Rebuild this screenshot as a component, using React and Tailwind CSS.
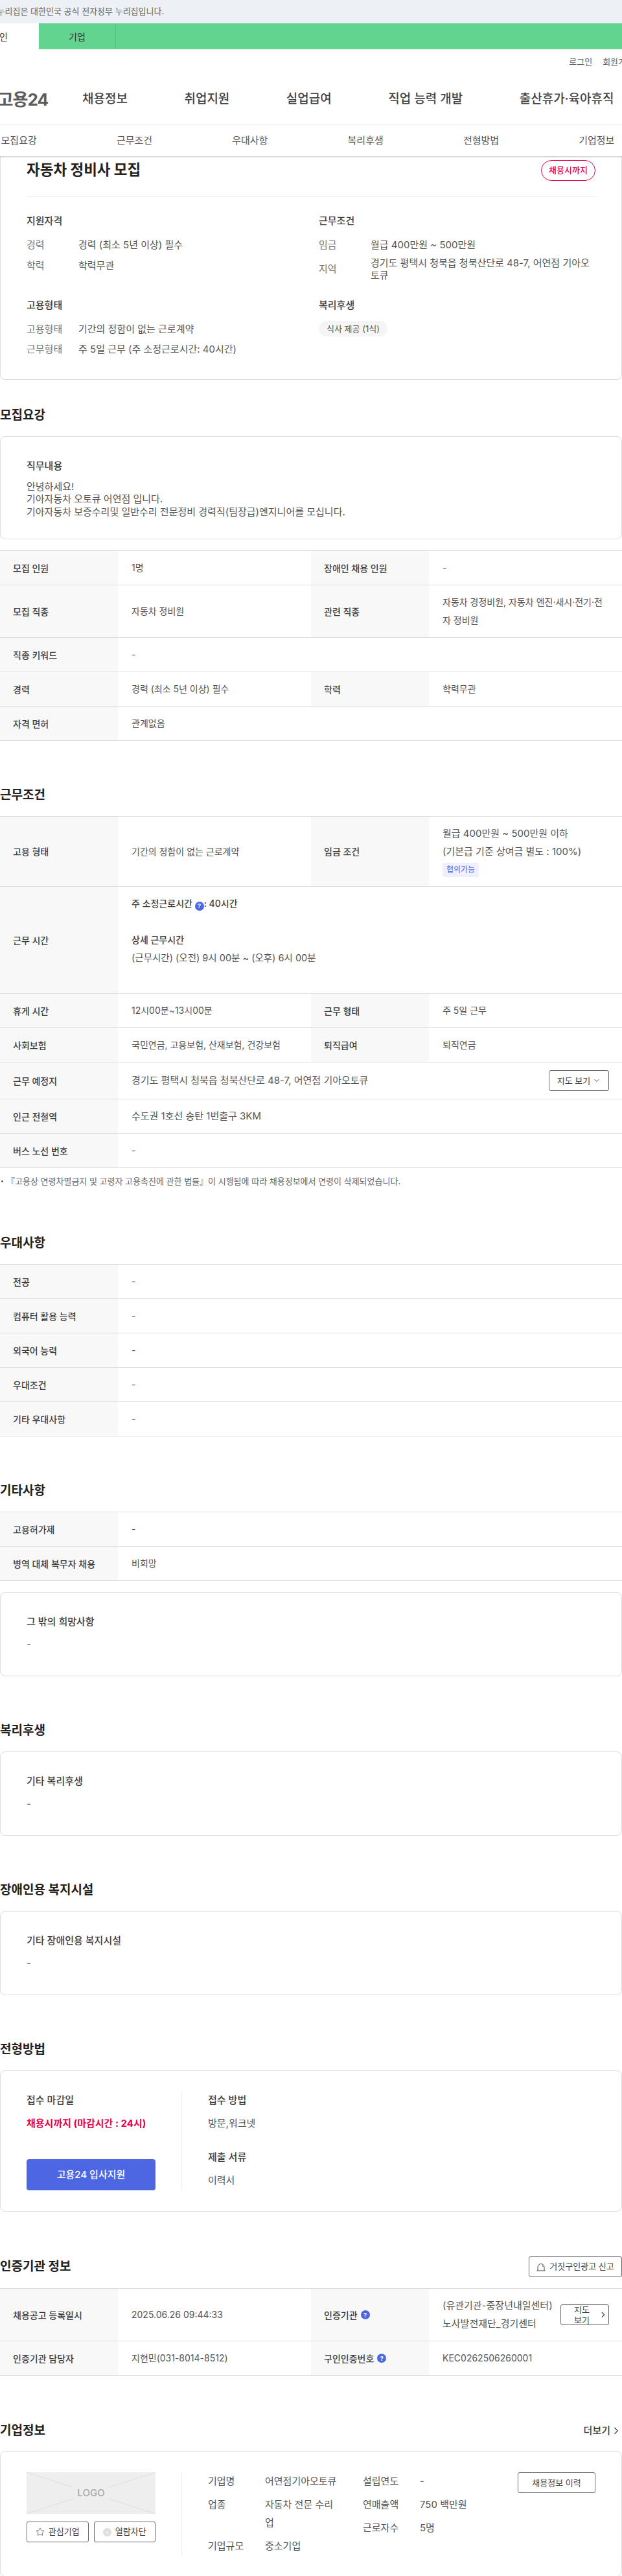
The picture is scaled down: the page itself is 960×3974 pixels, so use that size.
import { Star, ChevronDown, ChevronRight, X } from 'lucide-react';

const FONT = { fontFamily: '"Inter", "Noto Sans CJK KR", sans-serif' };

function Help() {
  return (
    <span className="inline-flex h-[14px] w-[14px] items-center justify-center rounded-full bg-[#4d67e3] align-[-2px] text-[9px] font-bold leading-none text-white">?</span>
  );
}

function Row({ cells, wide, className = '' }) {
  // cells: [label, value, label, value] 또는 [label, value]
  return (
    <div className={`flex border-b border-[#dddddd] ${className}`}>
      <div className="flex w-[182px] shrink-0 items-center bg-[#f8f8f8] pl-5 text-[14px] font-medium text-[#3c3c3c]">{cells[0]}</div>
      <div className={`${wide ? 'flex-1' : 'w-[298px]'} py-3 pl-[21px] text-[14px] leading-7 text-[#555555]`}>{cells[1]}</div>
      {cells.length > 2 && (
        <>
          <div className="flex w-[182px] shrink-0 items-center bg-[#f8f8f8] pl-5 text-[14px] font-medium text-[#3c3c3c]">{cells[2]}</div>
          <div className="flex-1 py-3 pl-[21px] pr-5 text-[14px] leading-7 text-[#555555]">{cells[3]}</div>
        </>
      )}
    </div>
  );
}

function Table({ children }) {
  return <div className="border-t border-[#dddddd]">{children}</div>;
}

function Heading({ children, className = 'mt-[68px] mb-4' }) {
  return <h3 className={`h-8 text-[19px] font-bold leading-8 text-[#222222] ${className}`}>{children}</h3>;
}

function Field({ label, value, className = '' }) {
  return (
    <div className={`flex text-[15px] leading-[19.5px] ${className}`}>
      <span className="w-20 shrink-0 self-center text-[#777777]">{label}</span>
      <span className="text-[#555555]">{value}</span>
    </div>
  );
}

function TextCard({ title }) {
  return (
    <div className="h-[130px] rounded-lg border border-[#dddddd] px-10 pt-[34px]">
      <div className="text-[15px] font-medium leading-[22px] text-[#3c3c3c]">{title}</div>
      <div className="mt-[14px] text-[15px] leading-[19.5px] text-[#555555]">-</div>
    </div>
  );
}

function Label({ children }) {
  return <div className="text-[15px] font-medium leading-[26px] text-[#3c3c3c]">{children}</div>;
}

export default function App() {
  return (
    <div className="h-[3974px] w-[960px] overflow-hidden bg-white" style={FONT}>
      {/* 상단 */}
      <div className="flex h-9 items-center whitespace-nowrap bg-[#edf0f5] text-[13px] text-[#666666]">
        <span className="ml-[-20px]">이 누리집은 대한민국 공식 전자정부 누리집입니다.</span>
      </div>
      <div className="flex h-10 bg-[#62d490] text-[14px] text-[#333333]">
        <div className="flex w-[60px] items-center overflow-hidden bg-white"><span className="ml-[-14px] whitespace-nowrap">개인</span></div>
        <div className="flex w-[119px] items-center justify-center border-r border-[#56c483]">기업</div>
      </div>

      <div className="flex h-10 items-center justify-end gap-4 whitespace-nowrap text-[13px] text-[#666666]">
        <span>로그인</span>
        <span className="mr-[-18px]">회원가입</span>
      </div>
      <div className="flex h-[77px] items-center whitespace-nowrap border-b border-[#eeeeee] pb-px">
        <div className="mr-[53px] flex w-[74px] shrink-0 justify-end text-[26px] font-bold tracking-[-1px] text-[#5c5c5c]">고용24</div>
        <nav className="flex gap-[87.5px] text-[19px] font-medium text-[#444444]">
          <span>채용정보</span>
          <span>취업지원</span>
          <span>실업급여</span>
          <span>직업 능력 개발</span>
          <span>출산휴가·육아휴직</span>
        </nav>
      </div>
      <div className="relative z-10 h-12 bg-white shadow-[0_1px_2px_rgba(0,0,0,0.25)]">
        <div className="ml-[-60px] flex h-full w-[1070px] text-[15px] text-[#555555]">
          {['모집요강', '근무조건', '우대사항', '복리후생', '전형방법', '기업정보'].map((t) => (
            <div key={t} className="flex flex-1 items-center justify-center">{t}</div>
          ))}
        </div>
      </div>

      {/* 공고 요약 */}
      <div className="rounded-b-lg border border-t-0 border-[#dddddd] px-10 pb-9">
        <div className="flex items-start justify-between border-b border-[#eeeeee] pb-6 pt-[6px]">
          <h2 className="text-[22.5px] font-bold leading-[30px] text-[#222222]">자동차 정비사 모집</h2>
          <span className="flex h-8 w-[84px] items-center justify-center rounded-full border border-[#e6004d] text-[13px] font-medium text-[#e6004d]">채용시까지</span>
        </div>
        <div className="mt-[26px] grid grid-cols-2 gap-x-6 gap-y-[25px]">
          <div>
            <div className="mb-4 text-[15px] font-medium leading-[22px] text-[#3c3c3c]">지원자격</div>
            <Field label="경력" value="경력 (최소 5년 이상) 필수" />
            <Field label="학력" value="학력무관" className="mt-3" />
          </div>
          <div>
            <div className="mb-4 text-[15px] font-medium leading-[22px] text-[#3c3c3c]">근무조건</div>
            <Field label="임금" value="월급 400만원 ~ 500만원" />
            <Field label="지역" value="경기도 평택시 청북읍 청북산단로 48-7, 어연점 기아오토큐" className="mt-2" />
          </div>
          <div>
            <div className="mb-4 text-[15px] font-medium leading-[22px] text-[#3c3c3c]">고용형태</div>
            <Field label="고용형태" value="기간의 정함이 없는 근로계약" />
            <Field label="근무형태" value="주 5일 근무 (주 소정근로시간: 40시간)" className="mt-3" />
          </div>
          <div>
            <div className="mb-3 text-[15px] font-medium leading-[22px] text-[#3c3c3c]">복리후생</div>
            <span className="inline-flex h-6 items-center rounded-full bg-[#f5f5f5] px-3 text-[13px] text-[#555555]">식사 제공 (1식)</span>
          </div>
        </div>
      </div>

      {/* 모집요강 */}
      <Heading className="mt-[39px] mb-4">모집요강</Heading>
      <div className="rounded-lg border border-[#dddddd] px-10 pb-8 pt-[34px]">
        <div className="text-[15px] font-medium leading-[22px] text-[#3c3c3c]">직무내용</div>
        <div className="mt-[11px] text-[15px] leading-[19.5px] text-[#555555]">
          안녕하세요!<br />
          기아자동차 오토큐 어연점 입니다.<br />
          기아자동차 보증수리및 일반수리 전문정비 경력직(팀장급)엔지니어를 모십니다.
        </div>
      </div>
      <div className="mt-[17px]">
        <Table>
          <Row cells={['모집 인원', '1명', '장애인 채용 인원', '-']} />
          <Row cells={['모집 직종', <span className="flex h-full items-center">자동차 정비원</span>, '관련 직종', '자동차 경정비원, 자동차 엔진·새시·전기·전자 정비원']} />
          <Row wide cells={['직종 키워드', '-']} />
          <Row cells={['경력', '경력 (최소 5년 이상) 필수', '학력', '학력무관']} />
          <Row wide cells={['자격 면허', '관계없음']} />
        </Table>
      </div>

      {/* 근무조건 */}
      <Heading>근무조건</Heading>
      <Table>
        <Row
          cells={[
            '고용 형태',
            <span className="flex h-full items-center">기간의 정함이 없는 근로계약</span>,
            '임금 조건',
            <div className="text-[15px]">
              월급 400만원 ~ 500만원 이하<br />
              (기본급 기준 상여금 별도 : 100%)
              <span className="mb-[2px] mt-[3px] flex h-[22px] w-14 items-center justify-center rounded-[3px] bg-[#eef1fd] text-[12px] text-[#4d67e3]">협의가능</span>
            </div>,
          ]}
        />
        <Row
          wide
          cells={[
            '근무 시간',
            <div className="text-[#3c3c3c]">
              <span className="font-medium">주 소정근로시간 <Help />: 40시간</span>
              <br />
              <br />
              <span className="font-medium">상세 근무시간</span>
              <br />
              <span className="text-[14.5px] text-[#555555]">(근무시간) (오전) 9시 00분 ~ (오후) 6시 00분</span>
              <br />
              <br />
            </div>,
          ]}
        />
        <Row cells={['휴게 시간', '12시00분~13시00분', '근무 형태', '주 5일 근무']} />
        <Row cells={['사회보험', '국민연금, 고용보험, 산재보험, 건강보험', '퇴직급여', '퇴직연금']} />
        <Row
          wide
          cells={[
            '근무 예정지',
            <div className="flex items-center justify-between pr-5">
              <span className="text-[15px]">경기도 평택시 청북읍 청북산단로 48-7, 어연점 기아오토큐</span>
              <span className="flex h-8 w-[93px] items-center justify-center gap-1 rounded-[3px] border border-[#666666] text-[13px] text-[#444444]">
                지도 보기 <ChevronDown size={12} />
              </span>
            </div>,
          ]}
        />
        <Row wide cells={['인근 전철역', <span className="text-[15px]">수도권 1호선 송탄 1번출구 3KM</span>]} />
        <Row wide cells={['버스 노선 번호', '-']} />
      </Table>
      <div className="mt-[10px] flex items-center gap-[5px] pl-[2px] text-[13px] leading-5 text-[#666666]">
        <span className="h-[3px] w-[3px] rounded-full bg-[#555555]" />
        『고용상 연령차별금지 및 고령자 고용촉진에 관한 법률』이 시행됨에 따라 채용정보에서 연령이 삭제되었습니다.
      </div>

      {/* 우대사항 */}
      <Heading className="mt-[70px] mb-4">우대사항</Heading>
      <Table>
        <Row wide cells={['전공', '-']} />
        <Row wide cells={['컴퓨터 활용 능력', '-']} />
        <Row wide cells={['외국어 능력', '-']} />
        <Row wide cells={['우대조건', '-']} />
        <Row wide cells={['기타 우대사항', '-']} />
      </Table>

      {/* 기타사항 */}
      <Heading>기타사항</Heading>
      <Table>
        <Row wide cells={['고용허가제', '-']} />
        <Row wide cells={['병역 대체 복무자 채용', '비희망']} />
      </Table>
      <div className="mt-[17px]">
        <TextCard title="그 밖의 희망사항" />
      </div>

      <Heading>복리후생</Heading>
      <TextCard title="기타 복리후생" />

      <Heading>장애인용 복지시설</Heading>
      <TextCard title="기타 장애인용 복지시설" />

      {/* 전형방법 */}
      <Heading>전형방법</Heading>
      <div className="flex rounded-lg border border-[#dddddd] px-10 py-8">
        <div className="flex h-[152px] w-[240px] shrink-0 flex-col justify-between border-r border-[#eeeeee] pr-10">
          <div>
            <Label>접수 마감일</Label>
            <div className="mt-[10px] whitespace-nowrap text-[15px] font-bold leading-[26px] text-[#e6004d]">채용시까지 (마감시간 : 24시)</div>
          </div>
          <div className="flex h-12 items-center justify-center rounded bg-[#4d67e3] text-[15px] font-medium text-white">고용24 입사지원</div>
        </div>
        <div className="pl-10">
          <Label>접수 방법</Label>
          <div className="mt-[10px] text-[15px] leading-[26px] text-[#555555]">방문,워크넷</div>
          <div className="mt-[26px]"><Label>제출 서류</Label></div>
          <div className="mt-[10px] text-[15px] leading-[26px] text-[#555555]">이력서</div>
        </div>
      </div>

      {/* 인증기관 정보 */}
      <div className="mb-[17px] mt-[69px] flex h-8 items-center justify-between">
        <h3 className="text-[19px] font-bold text-[#222222]">인증기관 정보</h3>
        <span className="flex h-8 w-[144px] items-center justify-center gap-[6px] rounded-[3px] border border-[#666666] text-[13px] text-[#444444]">
          <svg width="14" height="13" viewBox="0 0 14 13" fill="none" stroke="#444444" strokeWidth="1">
            <path d="M2 12V6.5a5 5 0 0 1 10 0V12M0.5 12h13M8.5 3.5a3 3 0 0 1 1.5 2.5" />
          </svg>
          거짓구인광고 신고
        </span>
      </div>
      <Table>
        <Row
          cells={[
            '채용공고 등록일시',
            <span className="flex h-full items-center">2025.06.26 09:44:33</span>,
            <span className="flex items-center gap-[5px]">인증기관 <Help /></span>,
            <div className="flex items-center justify-between">
              <span className="whitespace-nowrap text-[15px]">(유관기관-중장년내일센터)<br />노사발전재단_경기센터</span>
              <span className="flex h-8 w-[75px] items-center rounded-[3px] border border-[#666666] text-[13px] leading-[16.5px] text-[#444444]">
                <span className="ml-[9px] w-[46px] break-keep text-center">지도 보기</span>
                <ChevronRight size={14} strokeWidth={2} className="ml-[3px]" />
              </span>
            </div>,
          ]}
        />
        <Row
          cells={[
            '인증기관 담당자',
            '지현민(031-8014-8512)',
            <span className="flex items-center gap-[5px]">구인인증번호 <Help /></span>,
            'KEC0262506260001',
          ]}
        />
      </Table>

      {/* 기업정보 */}
      <div className="mb-[15px] mt-[69px] flex h-8 items-center justify-between">
        <h3 className="text-[19px] font-bold text-[#222222]">기업정보</h3>
        <span className="flex items-center text-[15px] font-medium text-[#3c3c3c]">더보기 <ChevronRight size={18} strokeWidth={1.5} /></span>
      </div>
      <div className="flex rounded-lg border border-[#dddddd] px-10 py-8">
        <div className="h-[128px] w-[240px] shrink-0 border-r border-[#eeeeee] pr-10">
          <div className="relative flex h-16 items-center justify-center bg-[#eeeeee]">
            <svg className="absolute inset-0 h-full w-full" viewBox="0 0 199 64" preserveAspectRatio="none" fill="none" stroke="#dddddd">
              <path d="M0 0L199 64M199 0L0 64" />
            </svg>
            <span className="relative bg-[#eeeeee] px-[6px] text-[15px] font-medium text-[#aaaaaa]">LOGO</span>
          </div>
          <div className="mt-3 flex gap-2">
            <span className="flex h-8 flex-1 items-center justify-center gap-[6px] rounded-[3px] border border-[#666666] text-[13px] text-[#444444]"><Star size={14} strokeWidth={1.3} />관심기업</span>
            <span className="flex h-8 flex-1 items-center justify-center gap-[6px] rounded-[3px] border border-[#666666] text-[13px] text-[#444444]">
              <span className="flex h-[13px] w-[13px] items-center justify-center rounded-full bg-[#dddddd] text-white"><X size={9} strokeWidth={2.5} /></span>
              열람차단
            </span>
          </div>
        </div>
        <div className="flex flex-1 pl-10 text-[15px] leading-7 text-[#555555]">
          <div className="grid w-[239px] shrink-0 grid-cols-[88px_113px] content-start gap-y-2">
            <span>기업명</span><span className="whitespace-nowrap">어연점기아오토큐</span>
            <span>업종</span><span>자동차 전문 수리업</span>
            <span>기업규모</span><span>중소기업</span>
          </div>
          <div className="grid flex-1 grid-cols-[88px_1fr] content-start gap-y-2">
            <span>설립연도</span><span>-</span>
            <span>연매출액</span><span>750 백만원</span>
            <span>근로자수</span><span>5명</span>
          </div>
          <span className="flex h-8 w-[120px] shrink-0 items-center justify-center rounded-[3px] border border-[#666666] text-[13px] leading-none text-[#444444]">채용정보 이력</span>
        </div>
      </div>
    </div>
  );
}
